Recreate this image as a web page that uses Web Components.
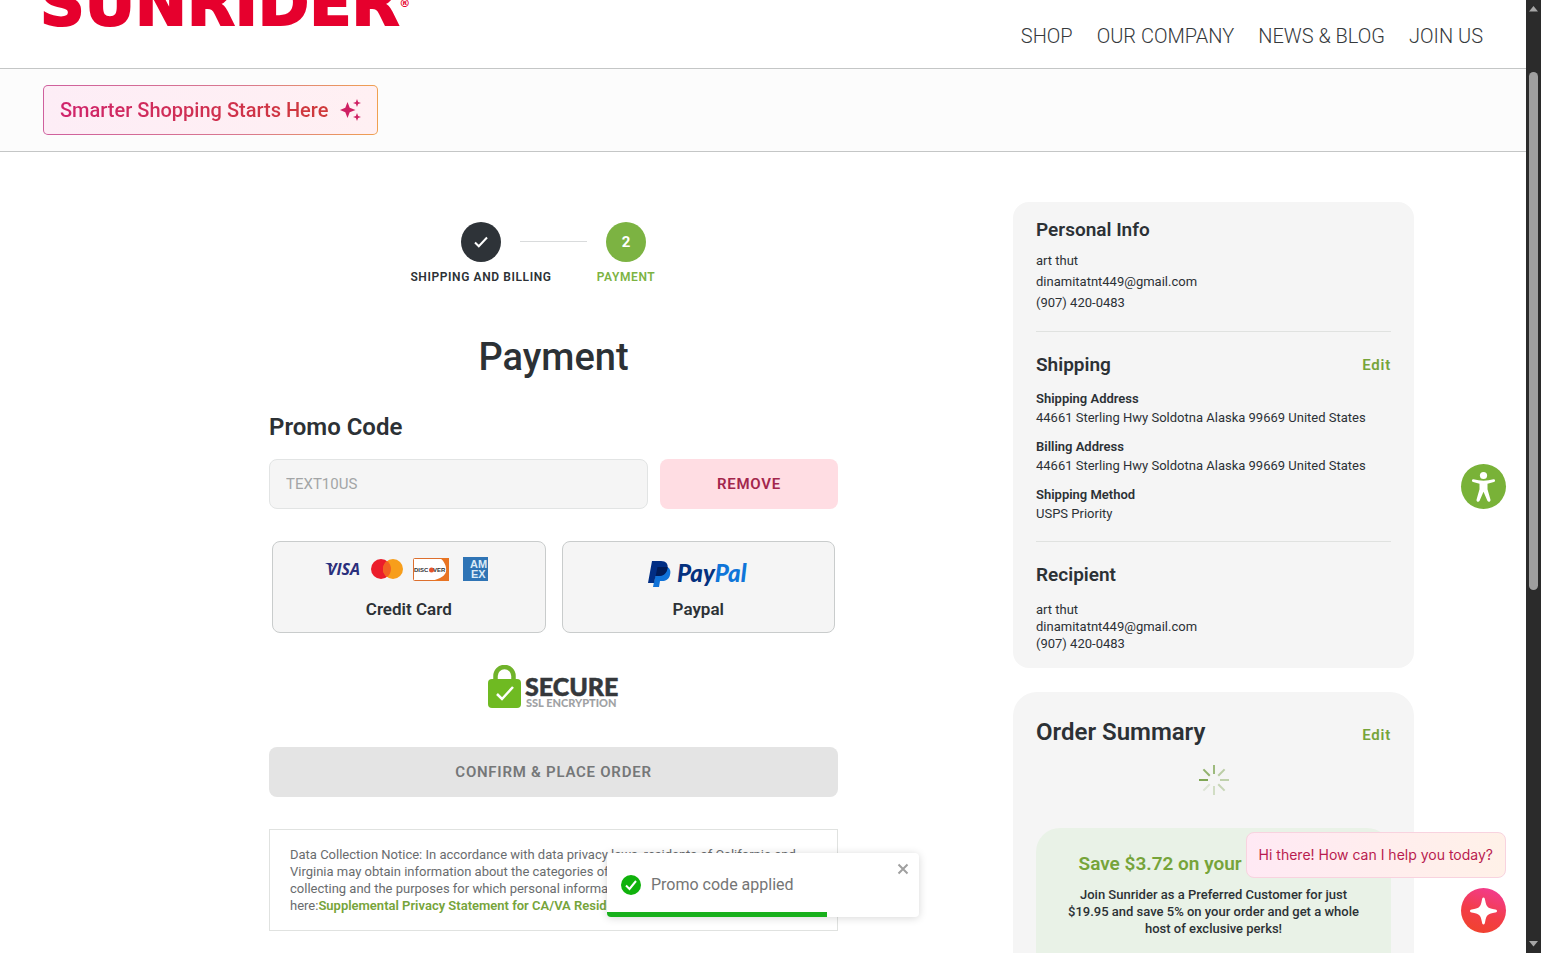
<!DOCTYPE html>
<html lang="en">
<head>
<meta charset="utf-8">
<meta name="viewport" content="width=device-width, initial-scale=1">
<title>Payment | Sunrider</title>
<style>
  :root {
    --ink: #2c3135;
    --green: #76a43a;
    --green-fill: #7cb342;
    --panel: #f5f5f5;
    --rule: #e0e2e0;
  }
  html, body { height: 100%; }
  body {
    margin: 0;
    overflow: hidden;
    background: #fff;
    color: var(--ink);
    font-family: Roboto, "Liberation Sans", sans-serif;
    font-size: 13px;
  }
</style>
</head>
<body>

<app-shell>
  <site-header slot="header"></site-header>
  <shopping-banner slot="header">Smarter Shopping Starts Here</shopping-banner>

  <checkout-steps>
    <checkout-step state="done">Shipping and Billing</checkout-step>
    <checkout-step state="current" number="2">Payment</checkout-step>
  </checkout-steps>
  <payment-form></payment-form>

  <side-card slot="aside">
    <info-section heading="Personal Info">
      <info-lines spacing="wide">
        <div>art thut</div>
        <div>dinamitatnt449@gmail.com</div>
        <div>(907) 420-0483</div>
      </info-lines>
    </info-section>
    <info-section heading="Shipping" edit>
      <info-pair label="Shipping Address">44661 Sterling Hwy Soldotna Alaska 99669 United States</info-pair>
      <info-pair label="Billing Address">44661 Sterling Hwy Soldotna Alaska 99669 United States</info-pair>
      <info-pair label="Shipping Method">USPS Priority</info-pair>
    </info-section>
    <info-section heading="Recipient">
      <info-lines>
        <div>art thut</div>
        <div>dinamitatnt449@gmail.com</div>
        <div>(907) 420-0483</div>
      </info-lines>
    </info-section>
  </side-card>
  <order-summary slot="aside"></order-summary>

  <toast-message slot="overlay">Promo code applied</toast-message>
  <accessibility-button slot="overlay"></accessibility-button>
  <chat-launcher slot="overlay">Hi there! How can I help you today?</chat-launcher>
</app-shell>

<script>
/**
 * AppShell
 *  - page frame: header, two column body, overlays and the scroll track
 */
class AppShell extends HTMLElement {
  constructor() {
    super();
    this.attachShadow({mode: 'open'}).innerHTML = `
      <style>
        :host { display: grid; grid-template-columns: minmax(0, 1fr) 15px; height: 100vh; overflow: hidden; }
        .page { position: relative; height: 100vh; overflow: hidden; }
        .body {
          display: grid;
          grid-template-columns: minmax(0, 1fr) 401px;
          gap: 18px;
          padding: 50px 112px;
        }
        main { max-width: 569px; width: 100%; margin: 0 auto; padding-top: 20px; box-sizing: border-box; }
        aside { display: flex; flex-direction: column; gap: 24px; }
        .track { display: flex; flex-direction: column; align-items: center; background: #2b2b2b; }
        .track svg { flex: none; width: 15px; height: 18px; fill: #a6a6a6; }
        .rail { flex: 1; width: 9px; display: flex; flex-direction: column; }
        .rail::before { content: ""; flex: 54; }
        .rail::after { content: ""; flex: 345; }
        .thumb { flex: 518; border-radius: 5px; background: #9f9f9f; }
      </style>
      <div class="page">
        <slot name="header"></slot>
        <div class="body">
          <main><slot></slot></main>
          <aside><slot name="aside"></slot></aside>
        </div>
        <slot name="overlay"></slot>
      </div>
      <div class="track">
        <svg viewBox="0 0 15 18"><path d="M3 11.500 7.500 6l4.500 5.500z"/></svg>
        <div class="rail"><div class="thumb"></div></div>
        <svg viewBox="0 0 15 18"><path d="M3 6l4.500 5.500L12 6z"/></svg>
      </div>
    `;
  }
}
customElements.define('app-shell', AppShell);

/**
 * SiteHeader
 *  - wordmark and main navigation
 */
class SiteHeader extends HTMLElement {
  constructor() {
    super();
    this.attachShadow({mode: 'open'}).innerHTML = `
      <style>
        :host {
          display: flex; justify-content: space-between; align-items: flex-end;
          height: 68px; padding: 0 43px 0 40px; overflow: hidden;
          border-bottom: 1px solid #c4c6c6;
        }
        .logo {
          display: flex; padding-bottom: 34px;
          font: 700 62px/60px "DejaVu Sans", sans-serif;
          color: #e6002d; text-decoration: none;
          -webkit-text-stroke: 2px #e6002d;
        }
        .logo sup { font-size: 11px; line-height: 32px; align-self: center; -webkit-text-stroke: 0; }
        nav { display: flex; gap: 24px; padding-bottom: 20px; }
        nav a { color: #35393c; text-decoration: none; font-size: 20px; line-height: 24px; font-weight: 300; }
      </style>
      <a class="logo" href="#">SUNRIDER<sup>®</sup></a>
      <nav>
        <a href="#">SHOP</a>
        <a href="#">OUR COMPANY</a>
        <a href="#">NEWS &amp; BLOG</a>
        <a href="#">JOIN US</a>
      </nav>
    `;
  }
}
customElements.define('site-header', SiteHeader);

/**
 * ShoppingBanner
 *  - strip with the assistant button
 */
class ShoppingBanner extends HTMLElement {
  constructor() {
    super();
    this.attachShadow({mode: 'open'}).innerHTML = `
      <style>
        :host { display: flex; padding: 16px 43px; background: #fcfcfc; border-bottom: 1px solid #c4c6c6; }
        button {
          display: flex; align-items: center; gap: 12px;
          height: 50px; padding: 0 16px; cursor: pointer;
          border: 1px solid transparent; border-radius: 5px;
          background: linear-gradient(90deg, #fdedf6, #fff0f3) padding-box,
                      linear-gradient(90deg, #cf5f9d, #d9798f 60%, #f0a050) border-box;
          font: 500 20px/24px Roboto, sans-serif;
        }
        span { background: linear-gradient(90deg, #d0246c, #cf3a3a); -webkit-background-clip: text; background-clip: text; color: transparent; }
        svg { width: 21px; height: 22px; fill: #cf2063; }
      </style>
      <button type="button">
        <span><slot></slot></span>
        <svg viewBox="0 0 21 22"><path d="M7.500 3 9.700 8.800 15.500 11 9.700 13.200 7.500 19 5.300 13.200 0 11 5.300 8.800zM17 0l1.100 2.900L21 4l-2.900 1.100L17 8l-1.100-2.900L13 4l2.900-1.100zM17 14l1.100 2.900L21 18l-2.900 1.100L17 22l-1.100-2.900L13 18l2.900-1.100z"/></svg>
      </button>
    `;
  }
}
customElements.define('shopping-banner', ShoppingBanner);

/**
 * CheckoutSteps / CheckoutStep
 */
class CheckoutSteps extends HTMLElement {
  constructor() {
    super();
    this.attachShadow({mode: 'open'}).innerHTML = `
      <style>
        :host { display: flex; justify-content: center; }
        ::slotted(*) { width: 145px; }
      </style>
      <slot></slot>
    `;
  }
}
customElements.define('checkout-steps', CheckoutSteps);

class CheckoutStep extends HTMLElement {
  connectedCallback() {
    const done = this.getAttribute('state') === 'done';
    const tick = '<svg viewBox="0 0 16 14"><path d="M2 7.500 5.800 11.300 14 2.500"/></svg>';
    this.attachShadow({mode: 'open'}).innerHTML = `
      <style>
        :host { position: relative; display: flex; flex-direction: column; align-items: center; gap: 7px; }
        :host(:not(:first-child))::before {
          content: ""; position: absolute; top: 19px; height: 1px;
          left: calc(-50% + 39px); right: calc(50% + 39px);
          background: #d9dbdc;
        }
        .dot {
          display: grid; place-items: center; width: 40px; height: 40px; border-radius: 50%;
          background: #2e3338; color: #fff; font-size: 15px; font-weight: 700;
        }
        .label { font-size: 12px; line-height: 16px; font-weight: 600; letter-spacing: .05em; text-transform: uppercase; white-space: nowrap; }
        :host([state="current"]) .dot { background: var(--green-fill); }
        :host([state="current"]) .label { color: var(--green-fill); }
        svg { width: 16px; height: 14px; fill: none; stroke: #fff; stroke-width: 2; }
      </style>
      <div class="dot">${ done ? tick : this.getAttribute('number') }</div>
      <div class="label"><slot></slot></div>
    `;
  }
}
customElements.define('checkout-step', CheckoutStep);

/**
 * PaymentOption
 *  - large choice button, logos go into the slot
 */
class PaymentOption extends HTMLElement {
  connectedCallback() {
    this.attachShadow({mode: 'open'}).innerHTML = `
      <style>
        :host { display: block; flex: 1; }
        button {
          display: flex; flex-direction: column; align-items: center; gap: 11px;
          width: 100%; height: 92px; padding: 10px 0 0; cursor: pointer;
          border: 1px solid #c9cccc; border-radius: 8px; background: var(--panel);
          color: var(--ink); font: 600 17px/24px Roboto, sans-serif;
        }
        .logos { display: flex; height: 34px; align-items: center; }
      </style>
      <button type="button">
        <span class="logos"><slot></slot></span>
        <span>${ this.getAttribute('label') }</span>
      </button>
    `;
  }
}
customElements.define('payment-option', PaymentOption);

/**
 * PaymentForm
 */
class PaymentForm extends HTMLElement {
  constructor() {
    super();
    this.attachShadow({mode: 'open'}).innerHTML = `
      <style>
        :host { display: block; }
        h1 { margin: 48px 0 0; text-align: center; font-size: 38px; line-height: 48px; font-weight: 500; }
        label { display: block; margin: 30px 0 16px; font-size: 24px; line-height: 32px; font-weight: 600; }
        .promo { display: flex; gap: 12px; }
        input {
          flex: 1; min-width: 0; height: 50px; box-sizing: border-box; padding: 0 16px;
          border: 1px solid #e2e4e4; border-radius: 8px; background: var(--panel);
          color: #a3a5a6; font: 400 15px/24px Roboto, sans-serif;
        }
        .btn {
          height: 50px; padding: 0; border: 0; border-radius: 8px;
          font: 600 15px/24px Roboto, sans-serif; letter-spacing: .05em; text-transform: uppercase;
        }
        .remove { width: 178px; background: #ffdde3; color: #a3264c; cursor: pointer; }
        .options { display: flex; gap: 16px; margin: 32px 3px; }
        .cards { width: 170px; height: 26px; }
        .paypal { width: 102px; height: 28px; margin-top: 10px; }
        .secure { display: block; width: 134px; height: 44px; margin: 0 auto 38px; }
        .confirm { width: 100%; background: #e4e4e4; color: #757778; }
        .notice {
          margin: 32px 0 0; padding: 16px 20px; border: 1px solid var(--rule);
          color: #696c6e; line-height: 17px;
        }
        .notice a { color: var(--green); font-weight: 600; text-decoration: none; }
      </style>
      <h1>Payment</h1>
      <label for="promo">Promo Code</label>
      <div class="promo">
        <input id="promo" type="text" value="TEXT10US" readonly>
        <button class="btn remove" type="button">Remove</button>
      </div>
      <div class="options">
        <payment-option label="Credit Card">
          <svg class="cards" viewBox="0 0 170 26">
            <text x="3" y="19" font-family="Open Sans" font-size="16" font-weight="700" font-style="italic" fill="#2a2f7c">VISA</text>
            <path d="M1 7h6l2 4z" fill="#2a2f7c"/>
            <circle cx="57" cy="13" r="10" fill="#eb1d2b"/>
            <circle cx="69" cy="13" r="10" fill="#f79e1b"/>
            <path d="M63 5a10 10 0 0 1 0 16a10 10 0 0 1 0-16z" fill="#f26122"/>
            <rect x="89.500" y="2.500" width="35" height="22" rx="1" fill="#fff" stroke="#dc6f2e"/>
            <path d="M116 2h9v23H104c10-1 16-4 18-9 1-6-2-11-6-14z" fill="#e87423"/>
            <text x="90" y="16" font-family="Liberation Sans" font-size="6" font-weight="700" fill="#333">DISC</text>
            <circle cx="107.500" cy="14" r="2.500" fill="#e4532a"/>
            <text x="109" y="16" font-family="Liberation Sans" font-size="6" font-weight="700" fill="#333">VER</text>
            <rect x="139" y="1" width="25" height="24" fill="#2f74b5"/>
            <text x="146" y="12" font-family="Liberation Sans" font-size="11" font-weight="700" fill="#dcebf7">AM</text>
            <text x="147" y="22" font-family="Liberation Sans" font-size="11" font-weight="700" fill="#dcebf7">EX</text>
          </svg>
        </payment-option>
        <payment-option label="Paypal">
          <svg class="paypal" viewBox="0 0 102 28">
            <path d="M10 7h10c3 1 4 4 3 8-1 4-4 6-8 6h-2l-1 6H6z" fill="#1072d8"/>
            <path d="M5 1H14c5 0 7.500 3 6.500 7.500-1 5-4 7.500-9 7.500H8.500l-1.500 7H1z" fill="#012e84"/>
            <path d="M10.500 7h10.100c-.5 6-4 9-9.100 9H8.700z" fill="#011c58"/>
            <text x="30" y="22" font-family="Lato" font-size="24" font-weight="900" font-style="italic" fill="#05317f">Pay<tspan fill="#0f75d9">Pal</tspan></text>
          </svg>
        </payment-option>
      </div>
      <svg class="secure" viewBox="0 0 134 44">
        <path d="M8.500 16v-5a9 9 0 0 1 18 0v5" fill="none" stroke="#70b32a" stroke-width="4.500"/>
        <rect x="1" y="14" width="33" height="29" rx="4" fill="#6fba22"/>
        <path d="M10 29l5 5 11-12" fill="none" stroke="#fff" stroke-width="2.500"/>
        <text x="38" y="31" font-family="Lato" font-size="25" font-weight="900" fill="#35383b" stroke="#35383b" stroke-width=".5">SECURE</text>
        <text x="39" y="42" font-family="Lato" font-size="11" font-weight="900" fill="#a0a2a4">SSL ENCRYPTION</text>
      </svg>
      <button class="btn confirm" type="button" disabled>Confirm &amp; Place Order</button>
      <p class="notice">Data Collection Notice: In accordance with data privacy laws, residents of California and
        Virginia may obtain information about the categories of personal information we are
        collecting and the purposes for which personal information will be used by clicking
        here:<a href="#">Supplemental Privacy Statement for CA/VA Residents</a></p>
    `;
  }
}
customElements.define('payment-form', PaymentForm);

/**
 * SideCard
 */
class SideCard extends HTMLElement {
  constructor() {
    super();
    this.attachShadow({mode: 'open'}).innerHTML = `
      <style>
        :host { display: block; padding: 16px 23px; border-radius: 16px; background: var(--panel); }
      </style>
      <slot></slot>
    `;
  }
}
customElements.define('side-card', SideCard);

/**
 * InfoSection
 *  - heading with optional Edit link, divided from the section above
 */
class InfoSection extends HTMLElement {
  connectedCallback() {
    this.attachShadow({mode: 'open'}).innerHTML = `
      <style>
        :host { display: block; }
        :host(:not(:first-child)) { margin-top: 18px; padding-top: 21px; border-top: 1px solid var(--rule); }
        header { display: flex; justify-content: space-between; align-items: center; }
        h2 { margin: 0; font-size: 19px; line-height: 24px; font-weight: 600; }
        a { color: var(--green); font-size: 15px; line-height: 24px; font-weight: 600; letter-spacing: .05em; text-decoration: none; }
        .content { display: flex; flex-direction: column; gap: 10px; }
      </style>
      <header>
        <h2>${ this.getAttribute('heading') }</h2>
        ${ this.hasAttribute('edit') ? '<a href="#">Edit</a>' : '' }
      </header>
      <div class="content"><slot></slot></div>
    `;
  }
}
customElements.define('info-section', InfoSection);

class InfoLines extends HTMLElement {
  constructor() {
    super();
    this.attachShadow({mode: 'open'}).innerHTML = `
      <style>
        :host { display: block; margin-top: 14px; line-height: 17px; }
        :host([spacing="wide"]) { margin-top: 8px; line-height: 21px; }
      </style>
      <slot></slot>
    `;
  }
}
customElements.define('info-lines', InfoLines);

class InfoPair extends HTMLElement {
  connectedCallback() {
    this.attachShadow({mode: 'open'}).innerHTML = `
      <style>
        :host { display: block; line-height: 19px; }
        :host(:first-child) { margin-top: 12px; }
        b { display: block; font-weight: 600; }
      </style>
      <b>${ this.getAttribute('label') }</b>
      <slot></slot>
    `;
  }
}
customElements.define('info-pair', InfoPair);

/**
 * OrderSummary
 *  - totals are still loading, membership offer below the spinner
 */
class OrderSummary extends HTMLElement {
  constructor() {
    super();
    const spokes = [.75, .5, .45, .4, .3, .2, 1, .85].map((opacity, i) =>
      `<path d="M16 1v9" opacity="${ opacity }" transform="rotate(${ i * 45 } 16 16)"/>`).join('');
    this.attachShadow({mode: 'open'}).innerHTML = `
      <style>
        :host { display: block; padding: 24px 23px; border-radius: 24px; background: var(--panel); }
        header { display: flex; justify-content: space-between; align-items: baseline; }
        h2 { margin: 0; font-size: 24px; line-height: 32px; font-weight: 600; }
        a { color: var(--green); font-size: 15px; line-height: 24px; font-weight: 600; letter-spacing: .05em; text-decoration: none; }
        svg { display: block; width: 32px; height: 32px; margin: 16px auto 32px; fill: none; stroke: #7fa654; stroke-width: 2; }
        .offer { padding: 24px 28px 80px; border-radius: 24px; background: #e9f2e7; text-align: center; }
        h3 { margin: 0 0 10px; color: var(--green); font-size: 19px; line-height: 24px; font-weight: 600; white-space: nowrap; }
        p { margin: 0; line-height: 17px; font-weight: 500; }
      </style>
      <header><h2>Order Summary</h2><a href="#">Edit</a></header>
      <svg viewBox="0 0 32 32">${ spokes }</svg>
      <div class="offer">
        <h3>Save $3.72 on your order today!</h3>
        <p>Join Sunrider as a Preferred Customer for just $19.95 and save 5% on your order and get a whole host of exclusive perks!</p>
      </div>
    `;
  }
}
customElements.define('order-summary', OrderSummary);

/**
 * ToastMessage
 */
class ToastMessage extends HTMLElement {
  constructor() {
    super();
    this.attachShadow({mode: 'open'}).innerHTML = `
      <style>
        :host {
          position: absolute; left: calc(50% - 156px); bottom: 36px; width: 312px; height: 64px;
          box-sizing: border-box; padding: 0 10px 0 14px; display: flex; align-items: center; gap: 10px;
          border-radius: 4px; overflow: hidden; background: #fff; box-shadow: 0 1px 8px rgba(0, 0, 0, .16);
          color: #757575; font-size: 16px; line-height: 24px;
        }
        .tick { width: 20px; height: 20px; }
        .message { flex: 1; }
        button { align-self: flex-start; display: flex; margin-top: 10px; padding: 0; border: 0; background: none; cursor: pointer; }
        .close { width: 12px; height: 12px; fill: none; stroke: #a0a0a0; stroke-width: 2; }
        .bar { position: absolute; left: 0; bottom: 0; width: 220px; height: 5px; background: #18b01c; }
      </style>
      <svg class="tick" viewBox="0 0 20 20"><circle cx="10" cy="10" r="10" fill="#10b20c"/><path d="M5 10.500 8.500 14 15 6" fill="none" stroke="#fff" stroke-width="2"/></svg>
      <span class="message"><slot></slot></span>
      <button type="button" aria-label="Close"><svg class="close" viewBox="0 0 12 12"><path d="M1.500 1.500l9 9M10.500 1.500l-9 9"/></svg></button>
      <div class="bar"></div>
    `;
  }
}
customElements.define('toast-message', ToastMessage);

/**
 * AccessibilityButton
 */
class AccessibilityButton extends HTMLElement {
  constructor() {
    super();
    this.attachShadow({mode: 'open'}).innerHTML = `
      <style>
        :host { position: absolute; right: 20px; top: calc(50% - 13px); }
        button { display: block; width: 45px; height: 45px; padding: 0; border: 0; border-radius: 50%; background: #79b238; cursor: pointer; }
        svg { display: block; fill: #fff; }
      </style>
      <button type="button" aria-label="Accessibility">
        <svg viewBox="0 0 45 45"><circle cx="22.500" cy="11.500" r="3.600"/><path d="M12.500 15.200c6.500 1.900 13.500 1.900 20 0 1.800-.3 2.200 2.200.4 2.800l-6.400 1.700v5.500l3 10.600c.3 2-2.200 2.900-3.100 1l-3.900-9-3.900 9c-.9 1.900-3.400 1-3.100-1l3-10.600v-5.500L12.100 18c-1.800-.6-1.400-3.100.4-2.800z"/></svg>
      </button>
    `;
  }
}
customElements.define('accessibility-button', AccessibilityButton);

/**
 * ChatLauncher
 *  - greeting bubble over the round assistant button
 */
class ChatLauncher extends HTMLElement {
  constructor() {
    super();
    this.attachShadow({mode: 'open'}).innerHTML = `
      <style>
        :host { position: absolute; right: 20px; bottom: 20px; display: flex; flex-direction: column; align-items: flex-end; gap: 10px; }
        .bubble {
          padding: 12px; border: 1px solid #f8d3df; border-radius: 8px;
          background: linear-gradient(90deg, #ffe9f4, #fff1e8);
          color: #b91c4f; font: 400 14px/20px Inter, sans-serif; white-space: nowrap;
        }
        button { width: 45px; height: 45px; padding: 0; border: 0; border-radius: 50%; background: linear-gradient(200deg, #f23b9c, #f33d48 55%, #f04427); cursor: pointer; }
        svg { display: block; fill: #fff; }
      </style>
      <div class="bubble"><slot></slot></div>
      <button type="button" aria-label="Open chat">
        <svg viewBox="0 0 45 45"><path d="M22.500 9.500c1.200 0 1.300.9 1.700 3 1.300 6.500 2.300 7.500 8.800 8.800 2.100.4 3 .5 3 1.700s-.9 1.300-3 1.700c-6.500 1.300-7.500 2.300-8.800 8.800-.4 2.100-.5 3-1.700 3s-1.300-.9-1.700-3c-1.300-6.500-2.300-7.500-8.800-8.800-2.100-.4-3-.5-3-1.700s.9-1.300 3-1.700c6.500-1.300 7.500-2.300 8.800-8.800.4-2.100.5-3 1.700-3z"/></svg>
      </button>
    `;
  }
}
customElements.define('chat-launcher', ChatLauncher);
</script>
</body>
</html>
